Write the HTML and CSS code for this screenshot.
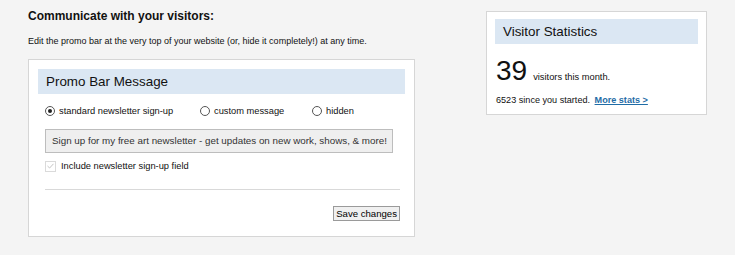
FILE: index.html
```html
<!DOCTYPE html>
<html lang="en">
<head>
    <meta charset="UTF-8">
    <title>Promo Bar</title>
    <link rel="stylesheet" href="styles.css">
</head>
<body>
    <div class="page">
        <div class="main">
            <h2 class="intro-title">Communicate with your visitors:</h2>
            <p class="intro-text">Edit the promo bar at the very top of your website (or, hide it completely!) at any time.</p>

            <div class="panel promo">
                <h3 class="panel-title">Promo Bar Message</h3>
                <div class="radios">
                    <label class="radio-label wide"><span class="radio checked"></span>standard newsletter sign-up</label>
                    <label class="radio-label mid"><span class="radio"></span>custom message</label>
                    <label class="radio-label"><span class="radio"></span>hidden</label>
                </div>
                <div class="message-box">Sign up for my free art newsletter - get updates on new work, shows, &amp; more!</div>
                <label class="check-label">
                    <span class="checkbox">
                        <svg width="7" height="6" viewBox="0 0 7 6"><path d="M0.5 3 L2.6 5 L6.5 0.8" fill="none" stroke="#c4c4c4" stroke-width="1"/></svg>
                    </span>
                    Include newsletter sign-up field
                </label>
                <div class="divider"></div>
                <div class="actions">
                    <button class="save-btn">Save changes</button>
                </div>
            </div>
        </div>

        <div class="panel stats">
            <h3 class="panel-title">Visitor Statistics</h3>
            <div class="stat-row">
                <span class="stat-number">39</span>
                <span class="stat-label">visitors this month.</span>
            </div>
            <p class="stat-total">6523 since you started. <a href="#" class="more-link">More stats &gt;</a></p>
        </div>
    </div>
</body>
</html>
```

FILE: styles.css
```css
body {
    margin: 0;
    background-color: #f4f4f4;
    font-family: 'Liberation Sans', Arial, sans-serif;
    color: #111;
}
.page {
    display: flex;
    align-items: flex-start;
    padding: 9px 0 0 28px;
    width: 735px;
    height: 255px;
    box-sizing: border-box;
}
.main {
    width: 387px;
}
.intro-title {
    font-size: 12px;
    font-weight: bold;
    margin: 0;
    line-height: 14px;
}
.intro-text {
    font-size: 9px;
    margin: 13px 0 0 0;
    line-height: 11px;
}
.panel {
    background: #fff;
    border: 1px solid #d6d6d6;
    box-sizing: border-box;
}
.promo {
    margin-top: 12px;
    padding: 9px 9px 15px 9px;
}
.stats {
    margin: 2px 0 0 71px;
    width: 221px;
    height: 104px;
    padding: 7px 8px 0 8px;
}
.panel-title {
    background: #dbe7f3;
    font-size: 13.4px;
    font-weight: normal;
    color: #111;
    margin: 0;
    padding: 0 8px;
    height: 25px;
    line-height: 25px;
}
.radios {
    display: flex;
    padding: 11px 0 0 7px;
    font-size: 9.3px;
    line-height: 12px;
}
.radio-label {
    display: flex;
    align-items: center;
    gap: 4px;
}
.radio-label.wide { width: 155px; }
.radio-label.mid { width: 112px; }
.radio {
    width: 8px;
    height: 8px;
    border: 1px solid #555;
    border-radius: 50%;
    background: #fff;
    position: relative;
}
.radio.checked::after {
    content: "";
    position: absolute;
    left: 2px;
    top: 2px;
    width: 4px;
    height: 4px;
    border-radius: 50%;
    background: #222;
}
.message-box {
    margin: 12px 12px 0 7px;
    height: 24px;
    line-height: 22px;
    box-sizing: border-box;
    border: 1px solid #bdbdbd;
    background: #efefef;
    color: #333;
    font-size: 9.8px;
    padding-left: 6px;
    white-space: nowrap;
    overflow: hidden;
}
.check-label {
    display: flex;
    align-items: center;
    gap: 5px;
    margin: 7px 0 0 7px;
    font-size: 9.3px;
    line-height: 12px;
}
.checkbox {
    width: 9px;
    height: 9px;
    border: 1px solid #dadada;
    display: flex;
    align-items: center;
    justify-content: center;
}
.divider {
    margin: 17px 5px 0 7px;
    border-top: 1px solid #d9d9d9;
}
.actions {
    display: flex;
    justify-content: flex-end;
    padding: 16px 5px 0 0;
}
.save-btn {
    font-family: 'Liberation Sans', Arial, sans-serif;
    font-size: 9.6px;
    color: #000;
    background: #f0f0f0;
    border: 1px solid #9a9a9a;
    height: 15px;
    padding: 0 2px;
    line-height: 13px;
    border-radius: 0;
}
.stat-row {
    display: flex;
    align-items: baseline;
    padding: 11px 0 0 1px;
}
.stat-number {
    font-size: 28px;
    line-height: 32px;
    margin-right: 6px;
}
.stat-label {
    font-size: 9.3px;
}
.stat-total {
    margin: 8px 0 0 1px;
    font-size: 9.1px;
    line-height: 11px;
}
.more-link {
    color: #1f6ca6;
    font-weight: bold;
    margin-left: 2px;
}
```
